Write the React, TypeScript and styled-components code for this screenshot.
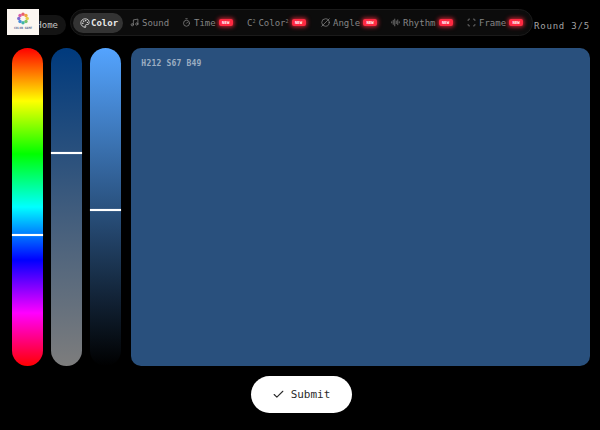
import React from "react";
import styled, { createGlobalStyle } from "styled-components";
import { Check, Palette, Music, Timer, CircleSlash2, AudioLines, Scan } from "lucide-react";

const GlobalStyle = createGlobalStyle`
  html, body {
    margin: 0;
    padding: 0;
    background: #000;
  }
  body {
    font-family: "DejaVu Sans Mono", "Liberation Mono", monospace;
  }
`;

const Page = styled.div`
  position: relative;
  width: 600px;
  height: 430px;
  display: flex;
  flex-direction: column;
  overflow: hidden;
  background: #000;
`;
const LogoBox = styled.div`
  position: absolute;
  top: 9px;
  left: 7px;
  width: 32px;
  height: 26px;
  background: #fbf6f1;
  z-index: 2;
`;
const TopBar = styled.header`
  height: 48px;
  display: flex;
  align-items: flex-start;
  padding: 9px 0 0 28px;
  box-sizing: border-box;
`;
const HomePill = styled.div`
  width: 38px;
  height: 20px;
  margin-top: 6px;
  margin-right: 4px;
  padding-right: 8px;
  box-sizing: border-box;
  border-radius: 10px;
  background: #141414;
  color: #c4c4c4;
  font-size: 9px;
  line-height: 21px;
  text-align: right;
`;
const Nav = styled.nav`
  width: 463px;
  height: 27px;
  padding: 0 2px;
  box-sizing: border-box;
  display: flex;
  align-items: center;
  border: 1px solid #1a1a1a;
  border-radius: 14px;
  background: #0c0c0c;
`;
const Tab = styled.div<{ $active?: boolean; $width: number }>`
  width: ${(p) => p.$width}px;
  height: 20px;
  flex: none;
  padding-left: 7px;
  box-sizing: border-box;
  display: flex;
  align-items: center;
  gap: ${(p) => (p.$active ? 1 : 3)}px;
  border-radius: 10px;
  background: ${(p) => (p.$active ? "#333333" : "transparent")};
  color: ${(p) => (p.$active ? "#e8e8e8" : "#858585")};
  font-size: 9px;
  font-weight: ${(p) => (p.$active ? 700 : 400)};
  svg {
    flex: none;
  }
`;
const Sup = styled.sup`
  font-size: 5px;
  line-height: 0;
  vertical-align: 3px;
`;
const NewBadge = styled.span`
  width: 14px;
  height: 7px;
  border-radius: 2px;
  background: #ff2a42;
  box-shadow: 0 0 4px 1px rgba(255, 40, 60, 0.8);
  color: #fff;
  font-size: 4px;
  font-weight: 700;
  line-height: 7px;
  text-align: center;
`;
const RoundLabel = styled.div`
  margin-top: 10px;
  margin-left: 1px;
  color: #a3a3a3;
  font-size: 9px;
  letter-spacing: 0.8px;
  line-height: 14px;
  white-space: nowrap;
`;
const Workspace = styled.main`
  height: 318px;
  display: flex;
  padding: 0 10px 0 12.4px;
  gap: 7.6px;
`;
const Slider = styled.div<{ $background: string }>`
  position: relative;
  width: 31px;
  height: 100%;
  flex: none;
  border-radius: 15.5px;
  background: ${(p) => p.$background};
`;
const Thumb = styled.div`
  position: absolute;
  left: 0;
  right: 0;
  height: 2px;
  margin-top: -1px;
  background: #fff;
  box-shadow: 0 0 1px rgba(255, 255, 255, 0.7);
`;
const Swatch = styled.div`
  flex: 1;
  margin-left: 2.5px;
  padding: 11px 10.7px;
  border-radius: 10px;
  background: rgb(41, 80, 125);
  color: rgba(255, 255, 255, 0.55);
  font-size: 8px;
  font-weight: 700;
  letter-spacing: 0.2px;
  line-height: 10px;
`;
const Footer = styled.footer`
  display: flex;
  justify-content: center;
  padding: 10px 0 0 2px;
`;
const SubmitButton = styled.button`
  width: 101px;
  height: 37px;
  padding: 0;
  border: none;
  border-radius: 18.5px;
  background: #fff;
  color: #2a2a2a;
  display: flex;
  align-items: center;
  justify-content: center;
  gap: 6px;
  font-family: inherit;
  font-size: 11px;
`;

const hue =
  "linear-gradient(to bottom, #f00 0%, #ff0 16.67%, #0f0 33.33%, #0ff 50%, #00f 66.67%, #f0f 83.33%, #f00 100%)";
const saturation = "linear-gradient(to bottom, rgb(0, 58, 125), rgb(125, 125, 125))";
const brightness = "linear-gradient(to bottom, rgb(84, 164, 255), rgb(0, 0, 0))";

const sliders = [
  { background: hue, value: 212 / 360 },
  { background: saturation, value: 0.33 },
  { background: brightness, value: 0.51 },
];

const Logo = () => {
  const colors = ["#e8606a", "#f2a33c", "#e3cf4a", "#7cc46a", "#3fb5a8", "#4a8fdc", "#7d6bd0", "#d95fa8"];
  return (
    <LogoBox>
      <svg width="32" height="26" viewBox="0 0 32 26">
        {colors.map((c, i) => {
          const a = (i / colors.length) * Math.PI * 2 - Math.PI / 2;
          return (
            <circle
              key={c}
              cx={16 + Math.cos(a) * 4.2}
              cy={9.5 + Math.sin(a) * 4.2}
              r="1.7"
              fill={c}
            />
          );
        })}
        <text x="16" y="20" textAnchor="middle" fontSize="3" fontWeight="700" fill="#5a6a96">
          COLOR GAME
        </text>
      </svg>
    </LogoBox>
  );
};

const App: React.FC = () => {
  return (
    <Page>
      <GlobalStyle />
      <Logo />
      <TopBar>
        <HomePill>Home</HomePill>
        <Nav>
          <Tab $active $width={50}>
            <Palette size={10} />
            Color
          </Tab>
          <Tab $width={52}>
            <Music size={9} />
            Sound
          </Tab>
          <Tab $width={65}>
            <Timer size={9} />
            Time
            <NewBadge>NEW</NewBadge>
          </Tab>
          <Tab $width={74}>
            <span>
              C<Sup>2</Sup>
            </span>
            <span>
              Color<Sup>2</Sup>
            </span>
            <NewBadge>NEW</NewBadge>
          </Tab>
          <Tab $width={70}>
            <CircleSlash2 size={9} />
            Angle
            <NewBadge>NEW</NewBadge>
          </Tab>
          <Tab $width={76}>
            <AudioLines size={9} />
            Rhythm
            <NewBadge>NEW</NewBadge>
          </Tab>
          <Tab $width={70}>
            <Scan size={9} />
            Frame
            <NewBadge>NEW</NewBadge>
          </Tab>
        </Nav>
        <RoundLabel>Round 3/5</RoundLabel>
      </TopBar>
      <Workspace>
        {sliders.map((s, i) => (
          <Slider key={i} $background={s.background}>
            <Thumb style={{ top: `${s.value * 100}%` }} />
          </Slider>
        ))}
        <Swatch>H212 S67 B49</Swatch>
      </Workspace>
      <Footer>
        <SubmitButton>
          <Check size={13} />
          Submit
        </SubmitButton>
      </Footer>
    </Page>
  );
};

export default App;
